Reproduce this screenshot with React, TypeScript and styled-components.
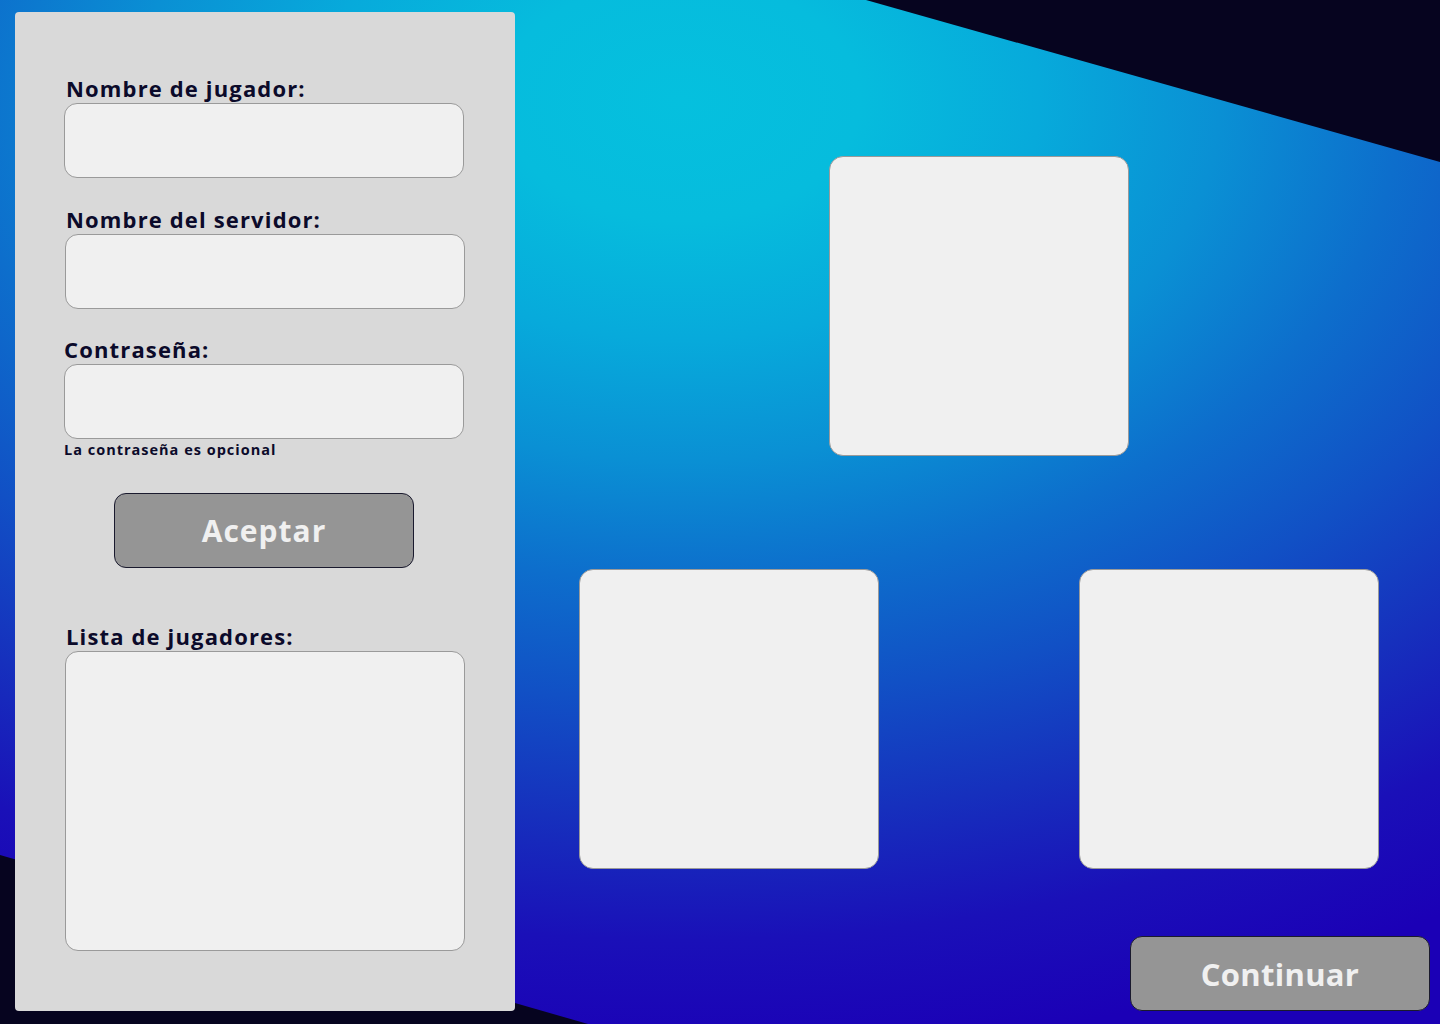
import React from "react";
import styled, { createGlobalStyle } from "styled-components";

const Global = createGlobalStyle`
  html, body { margin: 0; padding: 0; }
  body { background: #06041f; font-family: "Open Sans", "Liberation Sans", sans-serif; }
  * { box-sizing: border-box; }
`;

const Page = styled.div`
  position: relative;
  width: 1440px;
  height: 1024px;
  display: flex;
  overflow: hidden;
  background: #06041f;
  isolation: isolate;
  &::before {
    content: "";
    position: absolute;
    inset: 0;
    z-index: -1;
    clip-path: polygon(0 0, 866px 0, 1440px 162px, 1440px 1024px, 588px 1024px, 0 855px);
    background: radial-gradient(
      ellipse 1200px 800px at 680px 100px,
      #05c0de 0%,
      #06bcdd 15%,
      #07aadb 30%,
      #0a90d4 45%,
      #0d6ecc 60%,
      #1150c5 75%,
      #1630bd 90%,
      #1a10b8 105%,
      #1b00b6 120%
    );
  }
`;

const Panel = styled.aside`
  width: 500px;
  margin: 12px 0 13px 15px;
  background: #d9d9d9;
  border-radius: 4px;
  padding: 61px 50px 0 49px;
  display: flex;
  flex-direction: column;
`;

const Field = styled.div<{ $mt?: number }>`
  display: flex;
  flex-direction: column;
  margin-top: ${(p) => p.$mt ?? 0}px;
`;

const Label = styled.label<{ $indent?: number }>`
  font-size: 22px;
  font-weight: 700;
  color: #0b0a2a;
  line-height: 30px;
  padding-left: ${(p) => p.$indent ?? 2}px;
  letter-spacing: 1.15px;
`;

const Input = styled.div<{ $h?: number; $shift?: number }>`
  width: 400px;
  height: ${(p) => p.$h ?? 75}px;
  margin-left: ${(p) => p.$shift ?? 0}px;
  background: #f0f0f0;
  border: 1px solid #9a9a9a;
  border-radius: 13px;
`;

const Hint = styled.span`
  font-size: 14.5px;
  font-weight: 700;
  color: #0b0a2a;
  line-height: 20px;
  margin-top: 1px;
  letter-spacing: 1px;
`;

const Button = styled.button<{ $size?: number; $ls?: number }>`
  width: 300px;
  height: 75px;
  background: #959595;
  border: 1px solid #1a1a2e;
  border-radius: 12px;
  color: #f0f0f0;
  font-family: "Open Sans", "Liberation Sans", sans-serif;
  font-weight: 700;
  font-size: ${(p) => p.$size ?? 30}px;
  letter-spacing: ${(p) => p.$ls ?? 0.3}px;
  cursor: pointer;
  padding: 0;
`;

const AcceptRow = styled.div`
  display: flex;
  padding-left: 50px;
  margin-top: 33px;
`;

const Main = styled.main`
  flex: 1;
  display: flex;
  flex-direction: column;
  padding: 156px 10px 13px 64px;
`;

const Diagram = styled.div`
  width: 800px;
  display: flex;
  flex-direction: column;
  gap: 113px;
`;

const Row = styled.div<{ $justify: string }>`
  display: flex;
  justify-content: ${(p) => p.$justify};
`;

const Slot = styled.div`
  width: 300px;
  height: 300px;
  background: #f0f0f0;
  border: 1px solid #9a9a9a;
  border-radius: 14px;
`;

const Footer = styled.div`
  margin-top: auto;
  display: flex;
  justify-content: flex-end;
`;

export default function App() {
  return (
    <>
      <Global />
      <Page>
        <Panel>
          <Field>
            <Label>Nombre de jugador:</Label>
            <Input />
          </Field>
          <Field $mt={26}>
            <Label>Nombre del servidor:</Label>
            <Input $shift={1} />
          </Field>
          <Field $mt={25}>
            <Label $indent={0}>Contraseña:</Label>
            <Input />
            <Hint>La contraseña es opcional</Hint>
          </Field>
          <AcceptRow>
            <Button $size={30} $ls={1}>Aceptar</Button>
          </AcceptRow>
          <Field $mt={53}>
            <Label>Lista de jugadores:</Label>
            <Input $h={300} $shift={1} />
          </Field>
        </Panel>
        <Main>
          <Diagram>
            <Row $justify="center">
              <Slot />
            </Row>
            <Row $justify="space-between">
              <Slot />
              <Slot />
            </Row>
          </Diagram>
          <Footer>
            <Button $size={31} $ls={0.3}>Continuar</Button>
          </Footer>
        </Main>
      </Page>
    </>
  );
}
